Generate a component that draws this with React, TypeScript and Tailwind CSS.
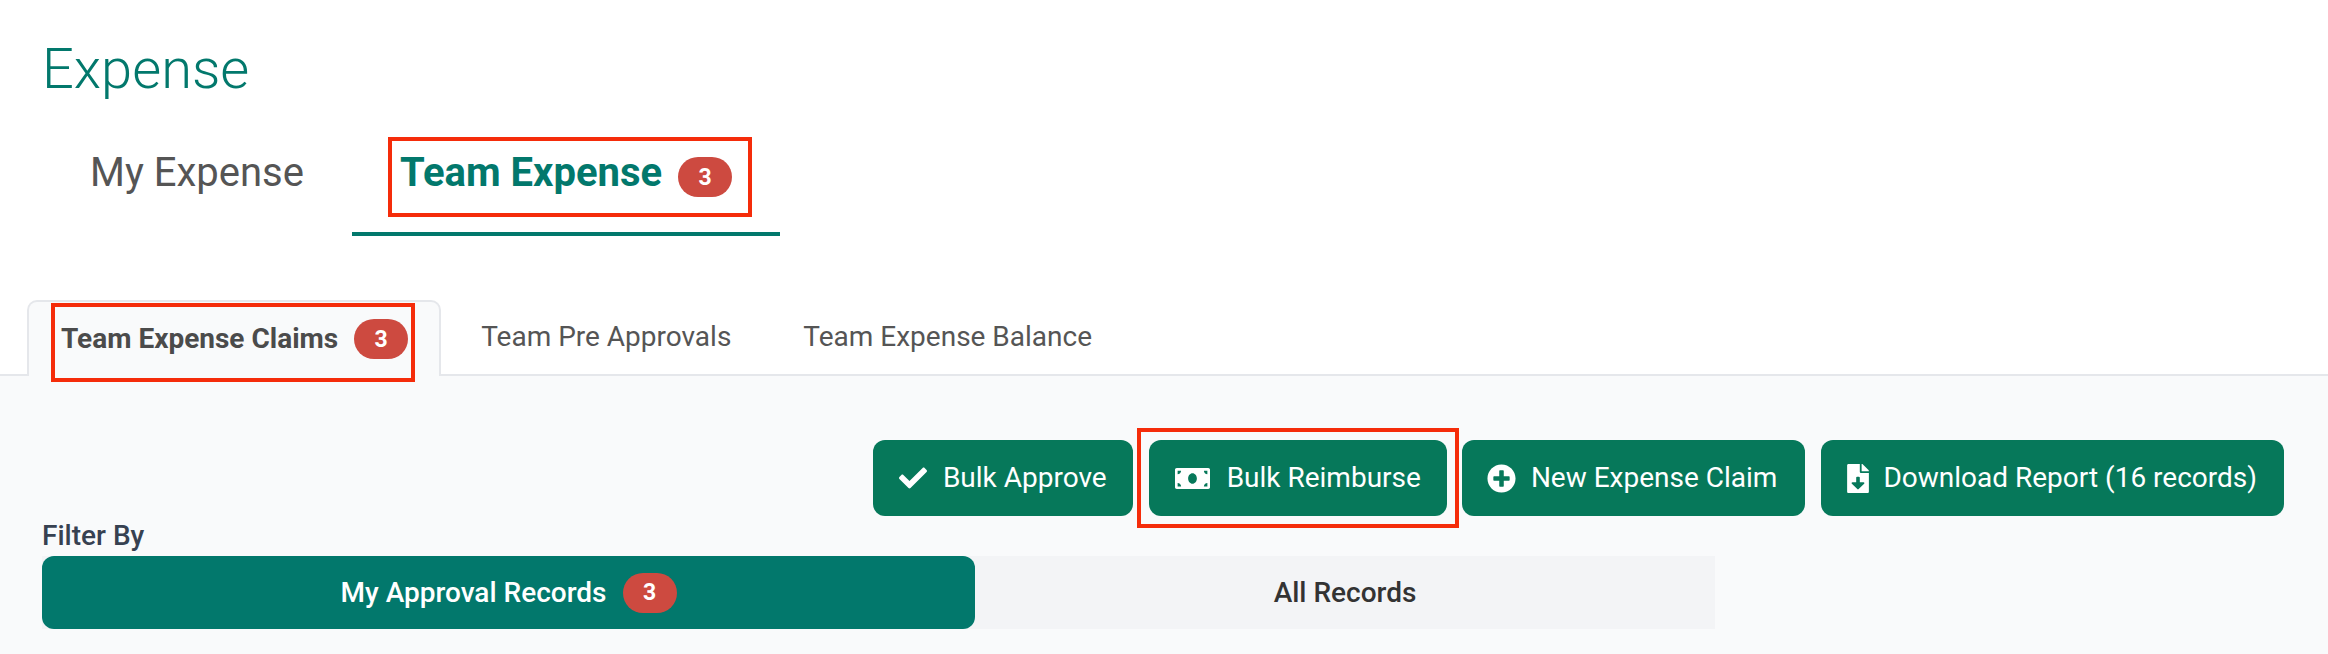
import React from "react";
import { FaCheck, FaMoneyBill, FaPlusCircle, FaFileDownload } from "react-icons/fa";

function Badge({ className = "" }: { className?: string }) {
  return (
    <span className={"inline-flex items-center justify-center w-[54px] h-[40px] rounded-[20px] bg-[#cd4a40] text-white text-[23px] font-bold leading-none " + className}>
      3
    </span>
  );
}

function RedBox({ className }: { className: string }) {
  return <span className={"absolute border-[4px] border-[#f52c0a] pointer-events-none " + className} />;
}

function ActionButton({ icon, label, children, className = "" }: { icon: React.ReactNode; label: string; children?: React.ReactNode; className?: string }) {
  return (
    <div className={"relative flex items-center h-[76px] rounded-[12px] bg-[#06785a] text-white text-[28px] leading-none " + className}>
      {icon}
      <span>{label}</span>
      {children}
    </div>
  );
}

export default function App() {
  return (
    <div className="w-[2328px] h-[654px] overflow-hidden bg-white flex flex-col font-['Roboto',sans-serif]">
      <h1 className="ml-[42px] mt-[38px] h-[62px] text-[56px] leading-[62px] font-light text-[#02786c]">Expense</h1>

      <div className="flex ml-[42px] mt-[32px] h-[104px] items-start">
        <div className="h-[104px] pl-[48px] pr-[48px] pt-[16px] text-[40px] leading-[50px] text-[#555555]">My Expense</div>
        <div className="h-[104px] w-[428px] pl-[48px] pt-[16px] border-b-[4px] border-[#02786c] text-[40px] leading-[50px] font-bold text-[#02786c]">
          <span className="relative inline-flex items-center">
            Team Expense
            <Badge className="ml-[16px] mt-[8px]" />
            <RedBox className="-left-[12px] -right-[20px] -top-[11px] -bottom-[19px]" />
          </span>
        </div>
      </div>

      <div className="flex ml-[27px] mt-[64px] h-[74px] items-stretch">
        <div className="relative z-10 -mb-[2px] h-[76px] pl-[32px] pr-[31px] border-2 border-b-0 border-[#e5e7eb] rounded-t-[10px] bg-[#f9fafb] pt-[17px] flex items-start text-[28px] leading-[40px] font-bold text-[#4b4b4b]">
          <span className="relative inline-flex items-center h-[40px]">
            Team Expense Claims
            <Badge className="ml-[16px]" />
            <RedBox className="-left-[10px] -right-[7px] -top-[16px] -bottom-[23px]" />
          </span>
        </div>
        <div className="ml-[6px] px-[34px] pt-[17px] text-[28px] leading-[40px] text-[#555555]">Team Pre Approvals</div>
        <div className="ml-[4px] px-[34px] pt-[17px] text-[28px] leading-[40px] text-[#555555]">Team Expense Balance</div>
      </div>

      <div className="flex-1 border-t-2 border-[#e5e7eb] bg-[#f9fafb] pt-[64px]">
        <div className="flex justify-end gap-[16px] pr-[44px]">
          <ActionButton className="pl-[26px] pr-[26px]" label="Bulk Approve" icon={<FaCheck className="w-[28px] h-[28px] mr-[16px]" />} />
          <ActionButton className="pl-[26px] pr-[26px] -mr-[1px]" label="Bulk Reimburse" icon={<FaMoneyBill className="w-[35px] h-[35px] mr-[17px]" />}>
            <RedBox className="-left-[12px] -right-[12px] -top-[12px] -bottom-[12px]" />
          </ActionButton>
          <ActionButton className="pl-[25px] pr-[28px]" label="New Expense Claim" icon={<FaPlusCircle className="w-[29px] h-[29px] mr-[15px]" />} />
          <ActionButton className="pl-[26px] pr-[27px]" label="Download Report (16 records)" icon={<FaFileDownload className="w-[22px] h-[29px] mr-[14px]" />} />
        </div>

        <div className="ml-[42px] mt-[3px] h-[37px] text-[28px] leading-[34px] font-medium text-[#374151]">Filter By</div>

        <div className="ml-[42px] w-[1673px] h-[73px] flex bg-[#f3f4f6]">
          <div className="w-[933px] rounded-[12px] bg-[#02786c] flex items-center justify-center text-white text-[28px] font-medium">
            <span>My Approval Records</span>
            <Badge className="ml-[16px]" />
          </div>
          <div className="flex-1 flex items-center justify-center text-[#333333] text-[28px] font-medium">All Records</div>
        </div>
      </div>
    </div>
  );
}
